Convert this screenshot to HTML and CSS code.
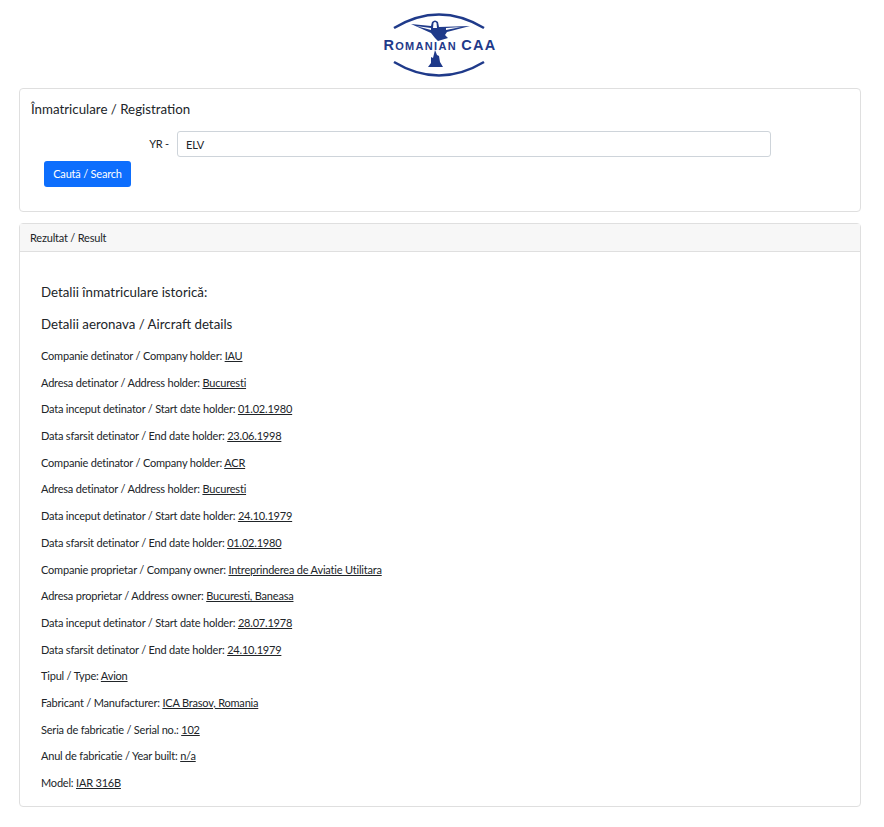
FILE: index.html
```html
<!DOCTYPE html>
<html lang="en">
<head>
  <meta charset="UTF-8" />
  <title>Registru aeronave</title>
  <link rel="stylesheet" href="styles.css">
</head>
<body>

  <!-- LOGO -->
  <div class="logo-row">
    <svg class="logo" width="120" height="70" viewBox="380 10 120 70">
      <path d="M394 28 Q439 1 484 28" fill="none" stroke="#1f3a8a" stroke-width="2.500"/>
      <path d="M394 62 Q439 89 484 62" fill="none" stroke="#1f3a8a" stroke-width="2.500"/>
      <path d="M411 24 L431 26 L432 22 Q435 19 438 22 L439 27 L470 26 L447 32 L445 35 L448 38 L438 41 L435 38 L431 33 Z" fill="#1f3a8a"/>
      <path d="M416 26 L431 28 L431 30 Z" fill="#fff"/>
      <path d="M446 28 L461 27 L446 30 Z" fill="#fff"/>
      <path d="M433.500 23 Q435 21 436.500 23 L437 28 L433 28 Z" fill="#fff"/>
      <path d="M428 67 L431 63 L431 57 L433 58 L435 50 L437 55 L439 56 L440 62 L443 67 Z" fill="#1f3a8a"/>
      <text class="logo-text" x="440" y="50" text-anchor="middle"><tspan class="logo-big">R</tspan>OMANIAN <tspan class="logo-big">CAA</tspan></text>
    </svg>
  </div>

  <div class="page">
    <!-- Search card -->
    <div class="card search-card">
      <div class="search-title">Înmatriculare / Registration</div>
      <form class="search-form">
        <div class="search-row">
          <label class="search-label" for="reg">YR -</label>
          <input type="text" id="reg" class="search-input" value="ELV">
        </div>
        <button type="button" class="btn-search">Caută / Search</button>
      </form>
    </div>

    <!-- Result card -->
    <div class="card result-card">
      <div class="card-header">Rezultat / Result</div>
      <div class="card-body">
        <h5>Detalii înmatriculare istorică:</h5>
        <h5>Detalii aeronava / Aircraft details</h5>
        <p>Companie detinator / Company holder: <u>IAU</u></p>
        <p>Adresa detinator / Address holder: <u>Bucuresti</u></p>
        <p>Data inceput detinator / Start date holder: <u>01.02.1980</u></p>
        <p>Data sfarsit detinator / End date holder: <u>23.06.1998</u></p>
        <p>Companie detinator / Company holder: <u>ACR</u></p>
        <p>Adresa detinator / Address holder: <u>Bucuresti</u></p>
        <p>Data inceput detinator / Start date holder: <u>24.10.1979</u></p>
        <p>Data sfarsit detinator / End date holder: <u>01.02.1980</u></p>
        <p>Companie proprietar / Company owner: <u>Intreprinderea de Aviatie Utilitara</u></p>
        <p>Adresa proprietar / Address owner: <u>Bucuresti, Baneasa</u></p>
        <p>Data inceput detinator / Start date holder: <u>28.07.1978</u></p>
        <p>Data sfarsit detinator / End date holder: <u>24.10.1979</u></p>
        <p>Tipul / Type: <u>Avion</u></p>
        <p>Fabricant / Manufacturer: <u>ICA Brasov, Romania</u></p>
        <p>Seria de fabricatie / Serial no.: <u>102</u></p>
        <p>Anul de fabricatie / Year built: <u>n/a</u></p>
        <p>Model: <u>IAR 316B</u></p>
      </div>
    </div>
  </div>

</body>
</html>
```

FILE: styles.css
```css
body {
  font-family: Lato, Roboto, sans-serif;
  color: #212529;
  background: #fff;
  margin: 0;
  font-size: 11px;
  letter-spacing: -0.2px;
  line-height: 18px;
}

.logo-row {
  display: flex;
  justify-content: center;
  padding: 10px 23px 8px 19px;
  height: 70px;
}

.logo-text {
  font-family: "Liberation Sans", sans-serif;
  font-weight: bold;
  font-size: 11px;
  fill: #1f3a8a;
  letter-spacing: 1.300px;
}

.logo-big {
  font-size: 14.5px;
}

.page {
  padding: 0 23px 20px 19px;
}

.card {
  border: 1px solid #dfdfdf;
  border-radius: 4px;
  background: #fff;
}

.search-card {
  height: 124px;
  padding: 10px 11px;
  box-sizing: border-box;
  margin-bottom: 11px;
}

.search-title {
  font-size: 13.3px;
  letter-spacing: 0;
  line-height: 20px;
  margin-bottom: 12px;
}

.search-row {
  display: flex;
  align-items: center;
}

.search-label {
  width: 146px;
  padding-right: 8px;
  box-sizing: border-box;
  text-align: right;
}

.search-input {
  width: 594px;
  height: 26px;
  box-sizing: border-box;
  border: 1px solid #ced4da;
  border-radius: 3px;
  padding: 0 8px;
  font: inherit;
  letter-spacing: inherit;
  color: #212529;
}

.btn-search {
  display: block;
  margin: 4px 0 0 13px;
  width: 87px;
  height: 26px;
  border: none;
  border-radius: 3px;
  background: #0d6efd;
  color: #fff;
  font: inherit;
  letter-spacing: inherit;
}

.card-header {
  background: #f7f7f7;
  border-bottom: 1px solid #dfdfdf;
  height: 27px;
  line-height: 28px;
  padding: 0 10px;
}

.card-body {
  padding: 30px 21px 5px 21px;
}

h5 {
  font-size: 13.3px;
  font-weight: 400;
  letter-spacing: 0;
  line-height: 20px;
  margin: 0 0 12px 0;
}

p {
  margin: 0 0 8.7px 0;
}

h5 + p {
  margin-top: 13px;
}
```
